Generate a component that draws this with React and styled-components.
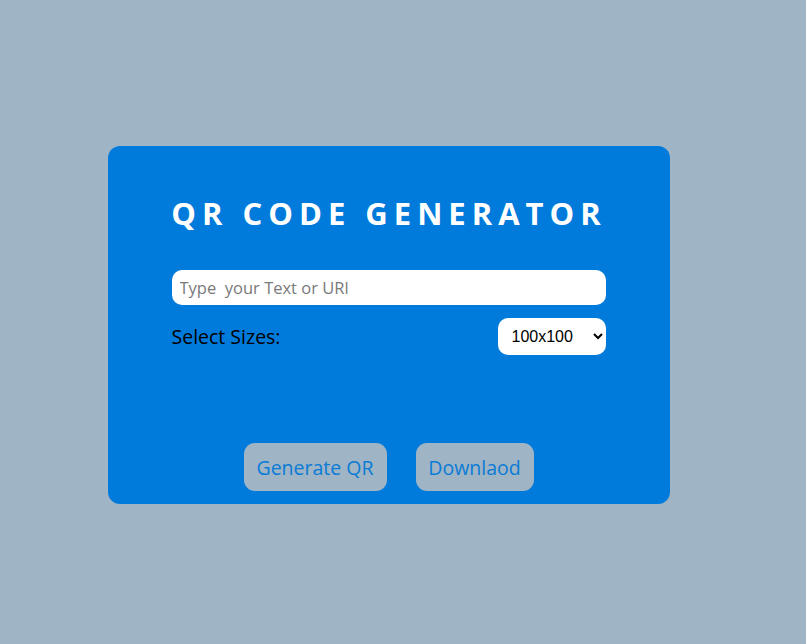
import React, { useState } from 'react';
import styled, { createGlobalStyle } from 'styled-components';

const GlobalStyle = createGlobalStyle`
  html, body {
    margin: 0;
    padding: 0;
    background: #9fb4c4;
    font-family: "Open Sans", "Noto Sans", sans-serif;
  }
`;

const Page = styled.div`
  min-height: 644px;
  display: flex;
  align-items: center;
  justify-content: center;
  padding-right: 29px;
  box-sizing: border-box;
`;

const Card = styled.div`
  width: 562px;
  height: 358px;
  box-sizing: border-box;
  background: #007bdb;
  border-radius: 12px;
  padding: 45px 64px 13px 64px;
  display: flex;
  flex-direction: column;
  margin-top: 6px;
`;

const Title = styled.h1`
  margin: 0 -21px 35px -20px;
  white-space: nowrap;
  text-align: center;
  color: #fff;
  font-size: 31px;
  font-weight: 700;
  letter-spacing: 6px;
  line-height: 44px;
`;

const TextInput = styled.input`
  height: 35px;
  box-sizing: border-box;
  border: none;
  border-radius: 10px;
  padding: 0 8px;
  font-family: inherit;
  font-size: 16.5px;
  color: #333;
  outline: none;
  &::placeholder {
    color: #7a7a7a;
  }
`;

const Row = styled.div`
  display: flex;
  align-items: center;
  justify-content: space-between;
  margin-top: 13px;
`;

const Label = styled.label`
  color: #000;
  font-size: 19.5px;
`;

const Select = styled.select`
  width: 108px;
  height: 37px;
  border: none;
  border-radius: 10px;
  background: #fff;
  padding: 0 8px 0 10px;
  font-family: "Liberation Sans", Arial, sans-serif;
  font-size: 16px;
  color: #000;
`;

const Actions = styled.div`
  margin-top: auto;
  display: flex;
  justify-content: center;
  gap: 29px;
`;

const Button = styled.button`
  height: 48px;
  width: ${p => p.$w}px;
  border: none;
  border-radius: 11px;
  background: #9fb4c4;
  color: #0a7bd6;
  font-family: inherit;
  font-size: 19.5px;
  padding: 0;
  cursor: pointer;
`;

export default function App() {
  const [text, setText] = useState('');
  const [size, setSize] = useState('100x100');

  return (
    <>
      <GlobalStyle />
      <Page>
        <Card>
          <Title>QR CODE GENERATOR</Title>
          <TextInput
            placeholder="Type  your Text or URl"
            value={text}
            onChange={e => setText(e.target.value)}
          />
          <Row>
            <Label>Select Sizes:</Label>
            <Select value={size} onChange={e => setSize(e.target.value)}>
              <option>100x100</option>
              <option>200x200</option>
              <option>300x300</option>
            </Select>
          </Row>
          <Actions>
            <Button $w={143}>Generate QR</Button>
            <Button $w={118}>Downlaod</Button>
          </Actions>
        </Card>
      </Page>
    </>
  );
}
